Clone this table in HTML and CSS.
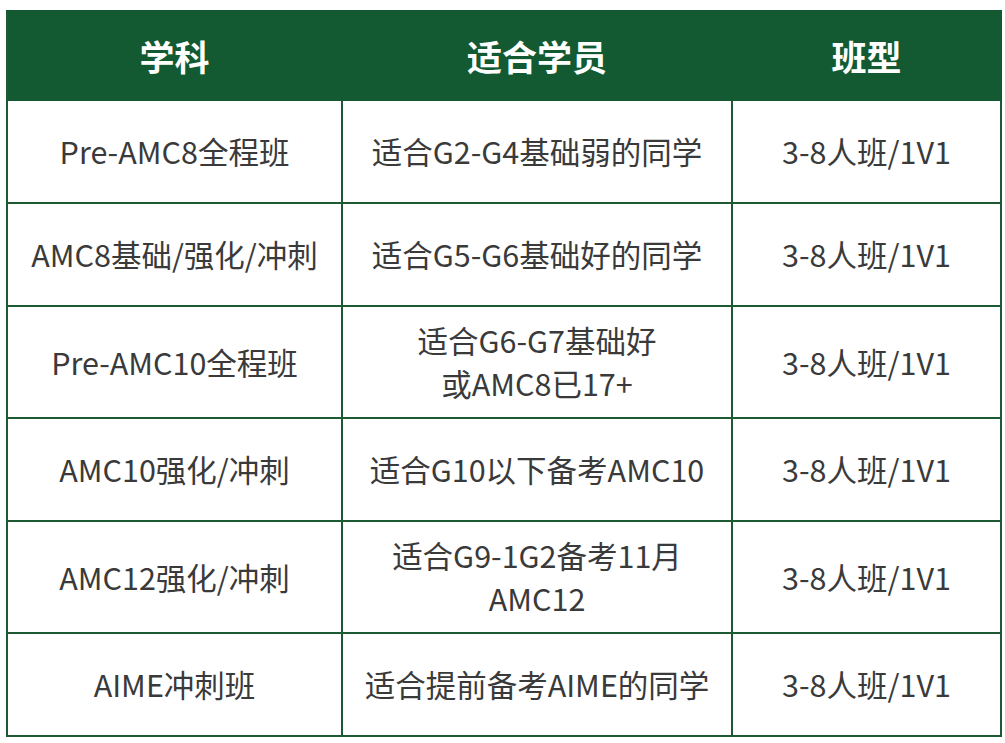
FILE: index.html
```html
<!DOCTYPE html>
<html lang="zh">
<head>
<meta charset="utf-8">
<link rel="stylesheet" href="styles.css">
</head>
<body>
<table class="course-table">
  <colgroup>
    <col class="col-subject">
    <col class="col-target">
    <col class="col-type">
  </colgroup>
  <thead>
    <tr><th>学科</th><th>适合学员</th><th>班型</th></tr>
  </thead>
  <tbody>
    <tr class="row"><td>Pre-AMC8全程班</td><td>适合G2-G4基础弱的同学</td><td>3-8人班/1V1</td></tr>
    <tr class="row"><td>AMC8基础/强化/冲刺</td><td>适合G5-G6基础好的同学</td><td>3-8人班/1V1</td></tr>
    <tr class="row"><td>Pre-AMC10全程班</td><td>适合G6-G7基础好<br>或AMC8已17+</td><td>3-8人班/1V1</td></tr>
    <tr class="row"><td>AMC10强化/冲刺</td><td>适合G10以下备考AMC10</td><td>3-8人班/1V1</td></tr>
    <tr class="row"><td>AMC12强化/冲刺</td><td>适合G9-1G2备考11月<br>AMC12</td><td>3-8人班/1V1</td></tr>
    <tr class="row"><td>AIME冲刺班</td><td>适合提前备考AIME的同学</td><td>3-8人班/1V1</td></tr>
  </tbody>
</table>
</body>
</html>
```
FILE: styles.css
```css
html, body {
  margin: 0;
  padding: 0;
  background: #ffffff;
}
body {
  padding: 10px 0 0 6px;
  font-family: "Noto Sans CJK SC", "Noto Sans", sans-serif;
}
.course-table {
  width: 994px;
  border-collapse: collapse;
  table-layout: fixed;
  border: 2px solid #1d5a34;
}
.col-subject { width: 335px; }
.col-target { width: 390px; }
.col-type { width: 269px; }
.course-table th {
  background: #135a32;
  color: #ffffff;
  font-size: 35px;
  font-weight: 700;
  height: 87px;
  padding: 0;
  border: 2px solid #135a32;
  border-left-color: #1d5a34;
  text-align: center;
  vertical-align: middle;
}
.course-table td {
  height: 103px;
  padding: 12px 2px;
  box-sizing: border-box;
  border: 2px solid #1d5a34;
  color: #3a3a3a;
  font-size: 30.5px;
  line-height: 43px;
  text-align: center;
  vertical-align: middle;
}
```
